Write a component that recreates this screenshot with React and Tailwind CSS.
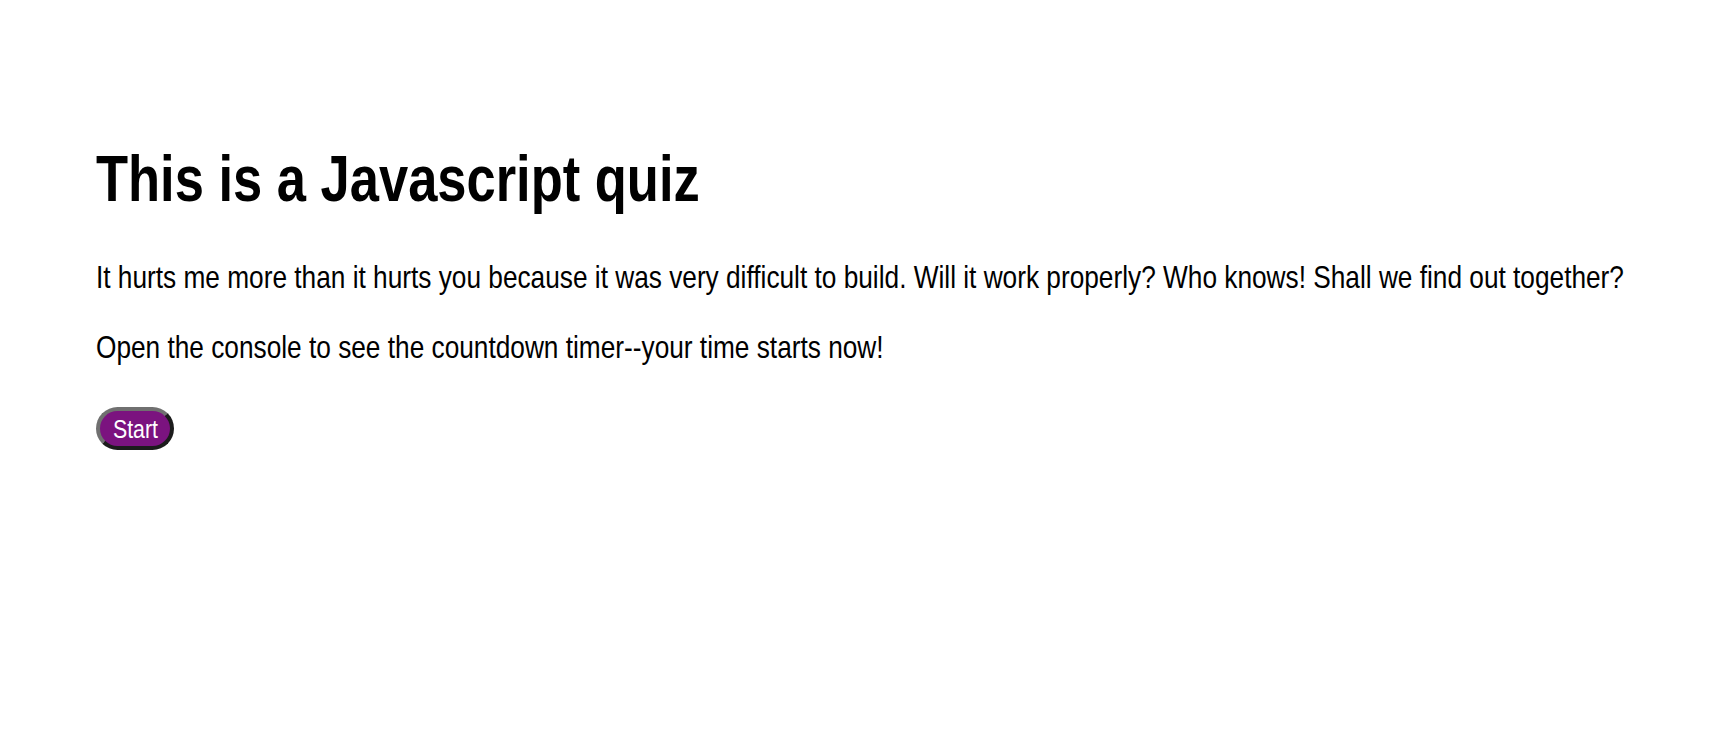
// No narrow font installed, so Liberation Sans is squeezed to Arial Narrow's width
export default function App() {
  return (
    <div className="min-h-screen bg-white text-black pl-[96px] pt-[147px] font-['Liberation_Sans','Arial',sans-serif]">
      <h1 className="text-[64px] leading-none font-bold whitespace-nowrap origin-left scale-x-[0.82]">
        This is a Javascript quiz
      </h1>
      <p className="mt-[50px] text-[32px] leading-none whitespace-nowrap origin-left scale-x-[0.82]">
        It hurts me more than it hurts you because it was very difficult to build. Will it work properly? Who knows! Shall we find out together?
      </p>
      <p className="mt-[38px] text-[32px] leading-none whitespace-nowrap origin-left scale-x-[0.82]">
        Open the console to see the countdown timer--your time starts now!
      </p>
      <button className="mt-[44px] w-[78px] h-[43px] flex items-center justify-center rounded-full bg-[#7b137f] text-white text-[26px] leading-none border-[4px] border-t-[#707070] border-l-[#707070] border-r-[#1c1c1c] border-b-[#1c1c1c]">
        <span className="inline-block scale-x-[0.82]">Start</span>
      </button>
    </div>
  );
}
